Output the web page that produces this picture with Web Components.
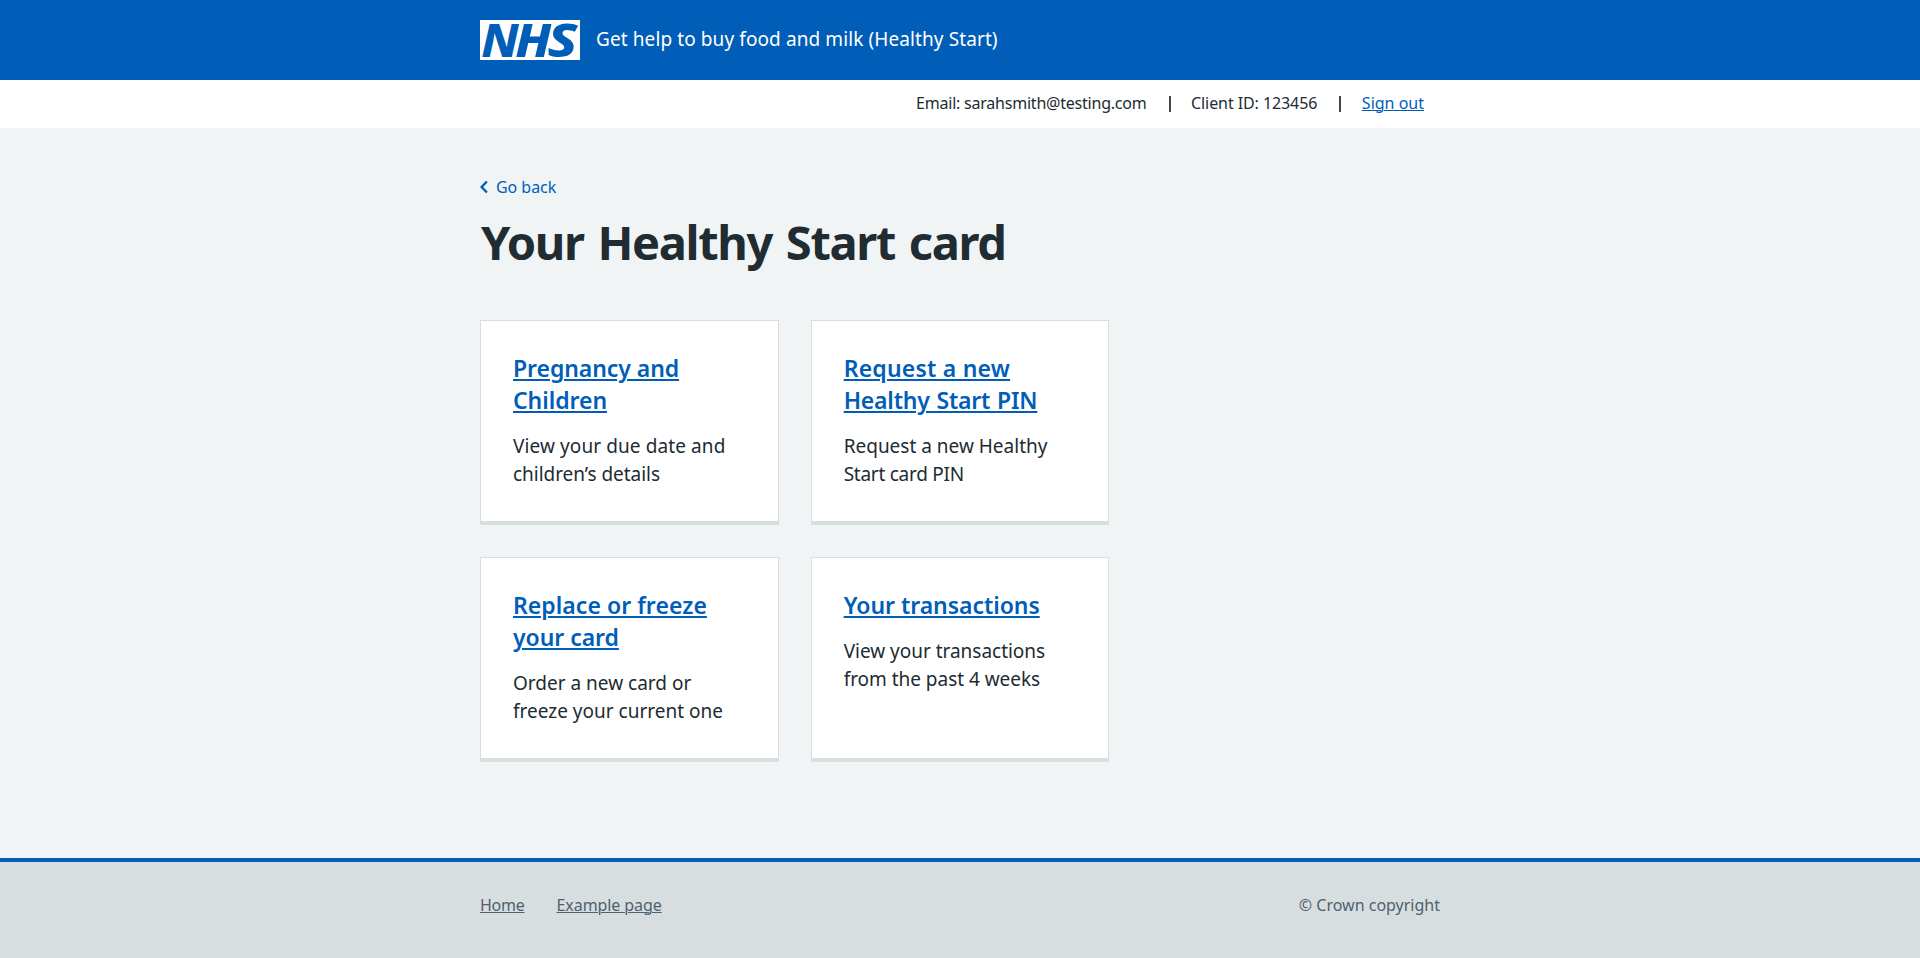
<!DOCTYPE html>
<html lang="en">
<head>
<meta charset="utf-8">
<title>Your Healthy Start card</title>
<style>
body { margin: 0; background: #f0f4f5; color: #212b32; font-family: "Noto Sans", "Open Sans", sans-serif; font-size: 16px; line-height: 24px; }
</style>
</head>
<body>
<healthy-page>
  <nhs-header slot="header">Get help to buy food and milk (Healthy Start)</nhs-header>
  <account-bar slot="account"></account-bar>
  <back-link>Go back</back-link>
  <page-title>Your Healthy Start card</page-title>
  <card-grid>
    <nav-card>
      <text-line slot="title" style="letter-spacing:-.07px">Pregnancy and</text-line>
      <text-line slot="title" style="letter-spacing:-.05px">Children</text-line>
      <text-line style="letter-spacing:.1px">View your due date and</text-line>
      <text-line style="letter-spacing:-.04px">children’s details</text-line>
    </nav-card>
    <nav-card>
      <text-line slot="title" style="letter-spacing:.22px">Request a new</text-line>
      <text-line slot="title" style="letter-spacing:-.2px;word-spacing:1px">Healthy Start PIN</text-line>
      <text-line>Request a new Healthy</text-line>
      <text-line style="letter-spacing:-.26px">Start card PIN</text-line>
    </nav-card>
    <nav-card>
      <text-line slot="title" style="letter-spacing:.05px">Replace or freeze</text-line>
      <text-line slot="title" style="letter-spacing:-.05px">your card</text-line>
      <text-line>Order a new card or</text-line>
      <text-line>freeze your current one</text-line>
    </nav-card>
    <nav-card>
      <text-line slot="title" style="letter-spacing:-.05px">Your transactions</text-line>
      <text-line style="letter-spacing:-.02px">View your transactions</text-line>
      <text-line style="letter-spacing:-.03px">from the past 4 weeks</text-line>
    </nav-card>
  </card-grid>
  <nhs-footer slot="footer"></nhs-footer>
</healthy-page>
<script>
const define = (name, html) => customElements.define(name, class extends HTMLElement {
  constructor() {
    super();
    this.attachShadow({ mode: 'open' }).innerHTML = html;
  }
});

define('text-line', `<style>:host{display:block;white-space:nowrap}</style><slot></slot>`);

define('nhs-logo', `<style>
  :host{display:block;width:100px;height:40px;flex:none}
  svg{display:block;overflow:visible}
  text{font:italic 850 46.5px "Noto Sans",sans-serif;fill:#005eb8}
</style>
<svg width="100" height="40" viewBox="0 0 100 40" role="img" aria-label="NHS">
  <rect width="100" height="40" fill="#fff"/>
  <text y="36.6"><tspan x="1.2" textLength="37.5" lengthAdjust="spacingAndGlyphs">N</tspan><tspan x="35.2" textLength="36" lengthAdjust="spacingAndGlyphs">H</tspan><tspan x="67.5" textLength="30" lengthAdjust="spacingAndGlyphs">S</tspan></text>
</svg>`);

define('nhs-header', `<style>
  :host{display:block;background:#005eb8;color:#fff}
  .inner{width:960px;height:80px;margin:0 auto;display:flex;align-items:center;gap:16px}
  .service{font-size:19px;line-height:28px;letter-spacing:.1px;padding-bottom:2px;white-space:nowrap}
</style>
<div class="inner"><nhs-logo></nhs-logo><div class="service"><slot></slot></div></div>`);

define('account-bar', `<style>
  :host{display:block;background:#fff}
  .inner{width:960px;box-sizing:border-box;height:48px;padding:0 16px 2px 0;margin:0 auto;display:flex;align-items:center;justify-content:flex-end;white-space:nowrap}
  .sep{width:2px;height:16px;background:#3f484e;margin:1px 20.5px 0 22px}
  .email{letter-spacing:-.22px}
  .client{letter-spacing:-.08px}
  a{color:#005eb8;text-decoration:underline;text-underline-offset:1px;text-decoration-thickness:1px}
</style>
<div class="inner"><span class="email">Email: sarahsmith@testing.com</span><i class="sep"></i><span class="client">Client ID: 123456</span><i class="sep"></i><a>Sign out</a></div>`);

define('back-link', `<style>
  :host{display:flex;align-items:center;color:#005eb8;letter-spacing:-.05px}
  svg{display:block;width:8px;height:14px;margin-right:8px}
</style>
<svg viewBox="0 0 8 14"><path d="M6.9 1.5 1.6 7l5.3 5.5" fill="none" stroke="#005eb8" stroke-width="2.3"/></svg><slot></slot>`);

define('page-title', `<style>
  :host{display:block;margin:15px 0 50px}
  h1{margin:0;font-size:47px;line-height:56px;font-weight:700;letter-spacing:-1.35px;word-spacing:3px;padding-left:1px}
</style><h1><slot></slot></h1>`);

define('card-grid', `<style>
  :host{display:grid;grid-template-columns:298.67px 298.67px;gap:32px}
</style><slot></slot>`);

define('nav-card', `<style>
  :host{display:block;background:#fff;border:1px solid #d8dde0;border-bottom-width:4px;padding:31px 32px 33px;font-size:19px;line-height:28px}
  h2{margin:0 0 16px;font-size:23px;line-height:32px;font-weight:600;color:#005eb8}
  ::slotted([slot=title]){width:max-content;text-decoration:underline;text-decoration-thickness:2px;text-underline-offset:2px}
</style><h2><slot name="title"></slot></h2><slot></slot>`);

define('nhs-footer', `<style>
  :host{display:block;flex:1;border-top:4px solid #005eb8;background:#d8dde0;color:#4c6272}
  .inner{width:960px;margin:0 auto;padding-top:31px;display:flex;gap:32px}
  a{text-decoration:underline;text-decoration-thickness:1px;text-underline-offset:1px}
  a:first-child{letter-spacing:-.25px}
  a+a{letter-spacing:-.08px}
  span{margin-left:auto}
</style>
<div class="inner"><a>Home</a><a>Example page</a><span>© Crown copyright</span></div>`);

define('healthy-page', `<style>
  :host{display:flex;flex-direction:column;min-height:100vh}
  main{width:960px;margin:0 auto;padding:47px 0 96px}
</style>
<slot name="header"></slot><slot name="account"></slot><main><slot></slot></main><slot name="footer"></slot>`);
</script>
</body>
</html>
